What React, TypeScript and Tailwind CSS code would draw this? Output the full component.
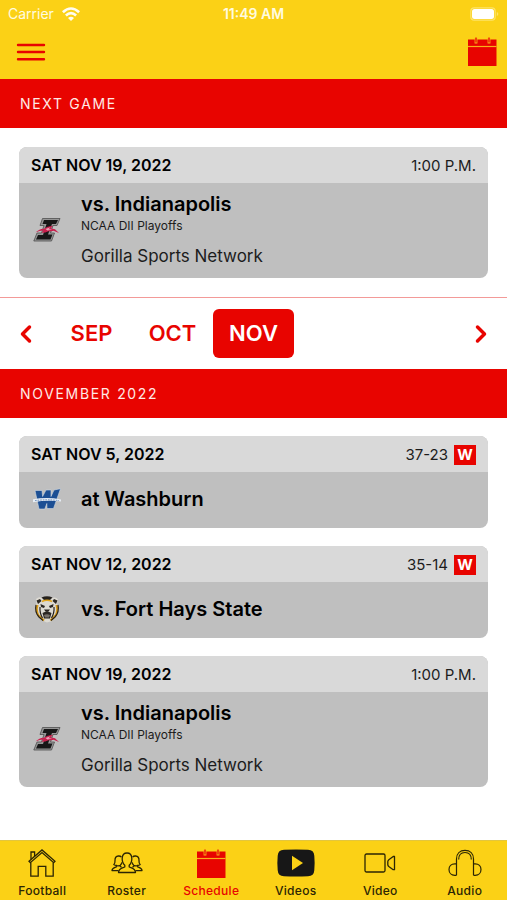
import React, { useState } from 'react';
import { ChevronLeft, ChevronRight } from 'lucide-react';

type Game = {
  id: number;
  date: string;
  opponent: string;
  logo: 'indianapolis' | 'washburn' | 'forthays';
  time?: string;
  score?: string;
  result?: string;
  note?: string;
  network?: string;
};

const nextGame: Game = {
  id: 3,
  date: 'SAT NOV 19, 2022',
  opponent: 'vs. Indianapolis',
  logo: 'indianapolis',
  time: '1:00 P.M.',
  note: 'NCAA DII Playoffs',
  network: 'Gorilla Sports Network',
};

const games: Game[] = [
  { id: 1, date: 'SAT NOV 5, 2022', opponent: 'at Washburn', logo: 'washburn', score: '37-23', result: 'W' },
  { id: 2, date: 'SAT NOV 12, 2022', opponent: 'vs. Fort Hays State', logo: 'forthays', score: '35-14', result: 'W' },
  nextGame,
];

const months = ['SEP', 'OCT', 'NOV'];

function CalendarIcon({ className }: { className?: string }) {
  return (
    <svg viewBox="0 0 30 30" className={className} aria-hidden="true">
      <path d="M1 2.5h28.500V29H1z" fill="#e80400" />
      <path d="M1 9.500h28.500" stroke="#f9b01a" strokeWidth="1.200" />
      <path d="M9 1v5.500M22 1v5.500" stroke="#f9b01a" strokeWidth="2.800" />
      <path d="M9 .5v5M22 .5v5" stroke="#e80400" strokeWidth="1.200" />
    </svg>
  );
}

function HouseIcon() {
  return (
    <svg viewBox="0 0 28 28" className="size-7" fill="none" stroke="#2b2504" strokeWidth="1.3" aria-hidden="true">
      <path d="M1 12.2 14 .9l13 11.3-1.3 1.5L14 3.6 2.3 13.7z" />
      <path d="M3 10.3V3h3.6v4.2" />
      <path d="M2.8 13.4v13.8h7.4v-9.8h7.6v9.8h7.4V13.4" />
    </svg>
  );
}

function RosterIcon() {
  return (
    <svg viewBox="0 0 32 28" className="h-7 w-8" fill="none" stroke="#2b2504" strokeWidth="1.3" strokeLinejoin="round" aria-hidden="true">
      <path d="M13.8 16.2c-2-1.7-2.8-4.2-2.6-7.2.2-3 2-5 4.8-5s4.6 2 4.8 5c.2 3-.6 5.5-2.6 7.2V18c2.5 1.2 6.300 1.600 6.300 5.500H7.500c0-3.900 3.800-4.300 6.300-5.500z" />
      <path d="M10.4 8.1C9.7 7.2 8.6 6.9 7.4 7c-2.5.2-3.5 2.2-3.4 4.5.1 2-.1 3.300-1.200 4 .9.8 1.900 1 2.900 1v1.100c-2.200.9-4.600 1.200-4.700 4h6.500M5.700 16.500c1.600.6 2.500.4 3.500-.3.9-.7 1.400-1.600 1.700-2.900M9.200 16.200v1.300l1.500.8" />
      <path d="M21.600 8.1c.7-.9 1.800-1.200 3-1.100 2.500.2 3.500 2.200 3.400 4.500-.1 2 .1 3.300 1.200 4-.9.8-1.900 1-2.900 1v1.100c2.200.9 4.600 1.200 4.700 4h-6.500M26.300 16.500c-1.600.6-2.500.4-3.500-.3-.9-.7-1.400-1.600-1.700-2.900M22.800 16.200v1.300l-1.500.8" />
    </svg>
  );
}

function PlayIcon() {
  return (
    <svg viewBox="0 0 38 28" className="h-7 w-[38px]" aria-hidden="true">
      <path d="M7 .8Q19 0 31 .8q6 .2 6.300 6Q38 14 37.300 21.200q-.3 5.800-6.300 6-12 .8-24 0-6-.2-6.300-6Q0 14 .7 6.800 1 1 7 .8z" fill="#171717" />
      <path d="M15 6.800v14.400L26 14z" fill="#fbd116" />
    </svg>
  );
}

function CameraIcon() {
  return (
    <svg viewBox="0 0 32 28" className="h-7 w-8" fill="none" stroke="#2b2504" strokeWidth="1.3" strokeLinejoin="round" aria-hidden="true">
      <rect x="1" y="5" width="20" height="18" rx="1.500" />
      <path d="M30.500 7.500v13.200h-1.300l-4.400-3.200q-1-.8-1-2v-2.800q0-1.200 1-2l4.400-3.200z" />
    </svg>
  );
}

function HeadphonesIcon() {
  return (
    <svg viewBox="0 0 34 28" className="h-7 w-[34px]" fill="none" stroke="#2b2504" strokeWidth="1.2" aria-hidden="true">
      <path d="M8.500 26.300V10C8.500 4.600 12 1.400 17 1.400s8.500 3.200 8.500 8.600v16.300" />
      <path d="M10.700 10.500c0-4.400 2.500-7 6.300-7s6.300 2.600 6.300 7" />
      <path d="M8.500 14.800H6.800C3.300 14.800 1 17.200 1 20.500s2.300 5.800 5.800 5.800h1.700M25.500 14.800h1.700c3.500 0 5.800 2.400 5.800 5.700s-2.300 5.800-5.800 5.800h-1.700" />
    </svg>
  );
}

function TeamLogo({ name }: { name: Game['logo'] }) {
  if (name === 'washburn') {
    return (
      <svg viewBox="0 0 28 28" className="size-7" role="img" aria-label="Washburn">
        <path d="M2 5.500h7l.6 6L13 5h5v6.500L21 5l6.500-1.300L20.500 23.500H14l-.2-5-2 5.500H6z" fill="#1c4f94" stroke="#cfd8e2" strokeWidth=".6" />
        <path d="M0 14.200q14-2.500 28 .2v2q-14-1.500-28 .8z" fill="#e6edf5" />
        <path d="M2 15.600q12-1.600 24 0" stroke="#4a74ab" strokeWidth=".8" strokeDasharray="1.600 1" fill="none" />
      </svg>
    );
  }
  if (name === 'forthays') {
    return (
      <svg viewBox="0 0 28 28" className="size-7" role="img" aria-label="Fort Hays State">
        <path d="M3 4q3-3 6-1 5-3 10 0 4-1.500 6 1.500l-1 4q3 6 .5 11L19 26l-5 1.500L8 25l-4-5Q1 14 3.500 9z" fill="#dddad2" />
        <path d="M8.500 2.500Q14 0 19.500 2.500L17 5h-6z" fill="#25211d" />
        <path d="M3.500 5.500 7 4l1.500 2L5 9zM24.500 5.500 21 4l-1.500 2L23 9z" fill="#2d2925" />
        <path d="M9 6.500q5-2.500 10 0" stroke="#e2a51c" strokeWidth="1.500" fill="none" />
        <path d="M4.500 10q-2 6 1 10.500l5.500 5M23.500 10q2 6-1 10.500l-5 5" stroke="#d99b17" strokeWidth="2.200" fill="none" />
        <path d="M3 10q-1.500 7 3 12l4 3.500M25 10q1.500 7-3 12l-4 3.500M7 12q-.5 6 2.500 11M21 12q.5 6-2.500 11" stroke="#28231e" strokeWidth="1.200" fill="none" />
        <path d="M7.500 9l4.500 2-1 2-3-1zM20.500 9 16 11l1 2 3-1zM11 14.500h6l-1.500 2h-3zM9.500 18q4.500-3 9 0l-1.500 5.500h-6z" fill="#2b2723" />
        <path d="M11 20q3-1.500 6 0l-1 2.500h-4z" fill="#77716a" />
      </svg>
    );
  }
  return (
    <svg viewBox="0 0 28 28" className="size-7" role="img" aria-label="Indianapolis">
      <path d="M9.500 3.500h17.500L24 10.500h-4L17.500 18h4L18.500 26H.8L4 18h4.500L11 10.500H7z" fill="#969696" stroke="#4f4f4f" strokeWidth=".8" />
      <path d="M11 5h14l-2 4h-4l-4 10.500h4.500L17.500 24.500H3L5 20h5l3.500-11H9.500z" fill="#171717" />
      <path d="M2.500 17.500q4-4 8.500-3.800 3-2.500 9-3l-2.500 2.500 4.500 1 4 3.800-5.500-2.200q-3 .8-5 .4-3 1.600-7 1.600l2-2.200q-4 0-8 1.900z" fill="#c91f4d" />
      <path d="M12.500 14l5-1.800-2 2 4 .3-5 .9z" fill="#e8a5b8" />
    </svg>
  );
}

function GameCard({ game }: { game: Game }) {
  return (
    <article className="overflow-hidden rounded-lg bg-[#bfbfbf] text-black">
      <div className="flex h-9 items-baseline justify-between bg-[#d9d9d9] px-3 pt-1.5">
        <h3 className="text-base font-semibold">{game.date}</h3>
        {game.time && <span className="text-[15px] leading-5 text-[#1c1c1c]">{game.time}</span>}
        {game.score && (
          <div className="flex items-baseline gap-1.5 text-[15px] leading-5 text-[#1c1c1c]">
            {game.score}
            <span className="w-[22px] bg-[#e80400] text-center font-bold text-white">{game.result}</span>
          </div>
        )}
      </div>
      <div className="flex min-h-14 items-center gap-5 px-3.5 pt-[7px] pb-2.5">
        <TeamLogo name={game.logo} />
        <div>
          <div className="text-xl leading-7 font-semibold">{game.opponent}</div>
          {game.note && <div className="text-xs leading-4 text-[#1c1c1c]">{game.note}</div>}
          {game.network && <div className="mt-2.5 text-[17px] leading-6 text-[#1c1c1c]">{game.network}</div>}
        </div>
      </div>
    </article>
  );
}

function SectionTitle({ children }: { children: React.ReactNode }) {
  return (
    <h2 className="flex h-[49px] items-center bg-[#e80400] px-5 text-sm tracking-[0.12em] text-[#ffe9e6]">{children}</h2>
  );
}

const tabs = [
  { label: 'Football', icon: <HouseIcon /> },
  { label: 'Roster', icon: <RosterIcon /> },
  { label: 'Schedule', icon: <CalendarIcon className="size-[30px]" /> },
  { label: 'Videos', icon: <PlayIcon /> },
  { label: 'Video', icon: <CameraIcon /> },
  { label: 'Audio', icon: <HeadphonesIcon /> },
];

export default function App() {
  const [month, setMonth] = useState('NOV');

  return (
    <div className="flex min-h-screen flex-col bg-white font-['Inter',sans-serif]">
      <header className="bg-[#fbd116]">
        {/* Status bar */}
        <div className="grid h-7 grid-cols-3 items-center px-2 text-sm text-[#fffbe0]">
          <div className="flex items-center gap-2">
            Carrier
            <svg viewBox="0 0 18 14" className="h-3.5 w-[18px]" fill="none" stroke="#fffdf0" strokeWidth="2.6" aria-hidden="true">
              <path d="M.9 5.300Q9-2.300 17.100 5.300M3.900 8.500q5.100-4.700 10.200 0" />
              <path d="M9 14 6 11q3-2.700 6 0z" fill="#fffdf0" stroke="none" />
            </svg>
          </div>
          <div className="text-center font-semibold">11:49 AM</div>
          <svg viewBox="0 0 29 14" className="h-3.5 w-[29px] justify-self-end" aria-hidden="true">
            <rect x=".8" y=".8" width="24.400" height="12.400" rx="3.500" fill="none" stroke="#fde36a" strokeWidth="1.2" />
            <rect x="2" y="2" width="22" height="10" rx="2.500" fill="#fff" />
            <path d="M26.800 5v4q1.500-.5 1.500-2t-1.500-2z" fill="#fde36a" />
          </svg>
        </div>
        <div className="flex h-[51px] items-center justify-between pr-2.5 pb-[3px] pl-4">
          <button type="button" aria-label="Menu">
            <svg viewBox="0 0 30 20" className="h-5 w-[30px]" stroke="#e80400" strokeWidth="2.400" strokeLinecap="round" aria-hidden="true">
              <path d="M2 3h26M2 10h26M2 17.200h26" />
            </svg>
          </button>
          <button type="button" aria-label="Calendar">
            <CalendarIcon className="size-[30px]" />
          </button>
        </div>
      </header>

      <main className="flex-1">
        <section>
          <SectionTitle>NEXT GAME</SectionTitle>
          <div className="p-[19px]">
            <GameCard game={nextGame} />
          </div>
        </section>

        {/* Month picker */}
        <nav className="flex h-[72px] items-center justify-between border-t border-[#f39a98] px-3 text-[#e80400]">
          <button type="button" aria-label="Previous month">
            <ChevronLeft className="size-7" strokeWidth={3} />
          </button>
          <div className="ml-[11px] flex flex-1">
            {months.map(m => (
              <button
                key={m}
                type="button"
                onClick={() => setMonth(m)}
                className={`h-[49px] w-[81px] rounded-md text-[22px] font-semibold ${m === month ? 'bg-[#e80400] text-white' : ''}`}
              >
                {m}
              </button>
            ))}
          </div>
          <button type="button" aria-label="Next month">
            <ChevronRight className="size-7" strokeWidth={3} />
          </button>
        </nav>

        <section>
          <SectionTitle>NOVEMBER 2022</SectionTitle>
          <div className="flex flex-col gap-[18px] px-[19px] py-[18px]">
            {games.map(g => (
              <GameCard key={g.id} game={g} />
            ))}
          </div>
        </section>
      </main>

      <footer className="grid grid-cols-6 border-t border-[#e3c63e] bg-[#fbd116] pt-2 pb-px">
        {tabs.map(t => (
          <a
            key={t.label}
            href={`#${t.label.toLowerCase()}`}
            className={`flex flex-col items-center text-xs font-medium tracking-wide ${t.label === 'Schedule' ? 'text-[#e80400]' : 'text-[#2b2504]'}`}
          >
            <span className="flex h-[34px] items-start">{t.icon}</span>
            {t.label}
          </a>
        ))}
      </footer>
    </div>
  );
}
